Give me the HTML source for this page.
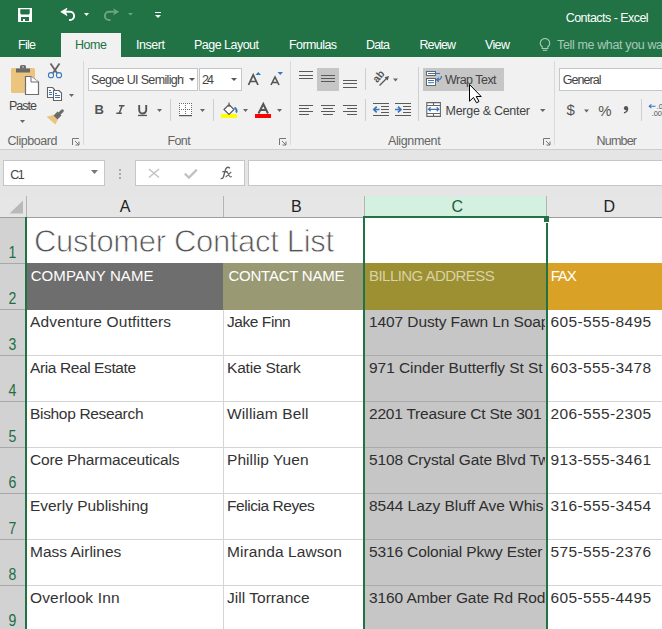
<!DOCTYPE html>
<html><head><meta charset="utf-8"><style>
html,body{margin:0;padding:0;width:662px;height:629px;overflow:hidden;background:#fff;font-family:"Liberation Sans", sans-serif;}
svg{overflow:visible}
</style></head><body>
<div style="position:absolute;left:0px;top:0px;width:662px;height:57px;background:#217346;"></div>
<div style="position:absolute;left:565.70px;top:12px;font-size:12.5px;line-height:12.5px;letter-spacing:-0.540px;color:#fff;white-space:nowrap;">Contacts - Excel</div>
<div style="position:absolute;left:61px;top:33px;width:60px;height:24px;background:#f1f1f1;"></div>
<div style="position:absolute;left:18.00px;top:39px;font-size:12.5px;line-height:12.5px;letter-spacing:-0.712px;color:#fff;white-space:nowrap;">File</div>
<div style="position:absolute;left:75.00px;top:39px;font-size:12.5px;line-height:12.5px;letter-spacing:-0.450px;color:#217346;white-space:nowrap;">Home</div>
<div style="position:absolute;left:136.00px;top:39px;font-size:12.5px;line-height:12.5px;letter-spacing:-0.452px;color:#fff;white-space:nowrap;">Insert</div>
<div style="position:absolute;left:194.00px;top:39px;font-size:12.5px;line-height:12.5px;letter-spacing:-0.520px;color:#fff;white-space:nowrap;">Page Layout</div>
<div style="position:absolute;left:289.00px;top:39px;font-size:12.5px;line-height:12.5px;letter-spacing:-0.586px;color:#fff;white-space:nowrap;">Formulas</div>
<div style="position:absolute;left:366.00px;top:39px;font-size:12.5px;line-height:12.5px;letter-spacing:-0.804px;color:#fff;white-space:nowrap;">Data</div>
<div style="position:absolute;left:419.50px;top:39px;font-size:12.5px;line-height:12.5px;letter-spacing:-0.905px;color:#fff;white-space:nowrap;">Review</div>
<div style="position:absolute;left:485.00px;top:39px;font-size:12.5px;line-height:12.5px;letter-spacing:-0.633px;color:#fff;white-space:nowrap;">View</div>
<div style="position:absolute;left:557.00px;top:39px;font-size:12.5px;line-height:12.5px;letter-spacing:-0.360px;color:rgba(255,255,255,0.62);white-space:nowrap;">Tell me what you want to do</div>
<div style="position:absolute;left:0px;top:57px;width:662px;height:92px;background:#f1f1f1;"></div>
<div style="position:absolute;left:83px;top:61px;width:1px;height:84px;background:#dadada;"></div>
<div style="position:absolute;left:290px;top:61px;width:1px;height:84px;background:#dadada;"></div>
<div style="position:absolute;left:554px;top:61px;width:1px;height:84px;background:#dadada;"></div>
<div style="position:absolute;left:9.00px;top:100px;font-size:12.5px;line-height:12.5px;letter-spacing:-0.991px;color:#444;white-space:nowrap;">Paste</div>
<div style="position:absolute;left:7.50px;top:135px;font-size:12.5px;line-height:12.5px;letter-spacing:-0.450px;color:#666;white-space:nowrap;">Clipboard</div>
<div style="position:absolute;left:88px;top:68px;width:108px;height:21px;background:#fff;border:1px solid #c6c6c6;"></div>
<div style="position:absolute;left:91.00px;top:74px;font-size:12.5px;line-height:12.5px;letter-spacing:-0.658px;color:#444;white-space:nowrap;width:93px;overflow:hidden;">Segoe UI Semilight</div>
<div style="position:absolute;left:199px;top:68px;width:41px;height:21px;background:#fff;border:1px solid #c6c6c6;"></div>
<div style="position:absolute;left:202.00px;top:74px;font-size:12.5px;line-height:12.5px;letter-spacing:-1.900px;color:#444;white-space:nowrap;">24</div>
<div style="position:absolute;left:94.50px;top:103px;font-size:13px;line-height:13px;letter-spacing:0.000px;color:#555;white-space:nowrap;font-weight:bold">B</div>
<div style="position:absolute;left:170px;top:99px;width:1px;height:22px;background:#cfcfcf;"></div>
<div style="position:absolute;left:213px;top:99px;width:1px;height:22px;background:#cfcfcf;"></div>
<div style="position:absolute;left:221px;top:114px;width:16px;height:4px;background:#ffff00;"></div>
<div style="position:absolute;left:255px;top:114px;width:16px;height:4px;background:#ff0000;"></div>
<div style="position:absolute;left:167.50px;top:135px;font-size:12.5px;line-height:12.5px;letter-spacing:-0.638px;color:#666;white-space:nowrap;">Font</div>
<div style="position:absolute;left:317px;top:68px;width:22px;height:23px;background:#c6c6c6;"></div>
<div style="position:absolute;left:365px;top:68px;width:1px;height:22px;background:#cfcfcf;"></div>
<div style="position:absolute;left:365px;top:99px;width:1px;height:22px;background:#cfcfcf;"></div>
<div style="position:absolute;left:418px;top:67px;width:1px;height:54px;background:#cfcfcf;"></div>
<div style="position:absolute;left:423px;top:68px;width:81px;height:23px;background:#c6c6c6;"></div>
<div style="position:absolute;left:445.00px;top:74px;font-size:12.5px;line-height:12.5px;letter-spacing:-0.527px;color:#444;white-space:nowrap;">Wrap Text</div>
<div style="position:absolute;left:445.60px;top:105px;font-size:12.5px;line-height:12.5px;letter-spacing:-0.295px;color:#444;white-space:nowrap;">Merge &amp; Center</div>
<div style="position:absolute;left:388.00px;top:135px;font-size:12.5px;line-height:12.5px;letter-spacing:-0.373px;color:#666;white-space:nowrap;">Alignment</div>
<div style="position:absolute;left:559px;top:68px;width:108px;height:21px;background:#fff;border:1px solid #c6c6c6;"></div>
<div style="position:absolute;left:562.70px;top:74px;font-size:12.5px;line-height:12.5px;letter-spacing:-0.929px;color:#444;white-space:nowrap;">General</div>
<div style="position:absolute;left:566.60px;top:102px;font-size:15px;line-height:15px;letter-spacing:0.000px;color:#555;white-space:nowrap;">$</div>
<div style="position:absolute;left:598.30px;top:103px;font-size:15px;line-height:15px;letter-spacing:0.000px;color:#555;white-space:nowrap;">%</div>
<div style="position:absolute;left:641px;top:99px;width:1px;height:22px;background:#cfcfcf;"></div>
<div style="position:absolute;left:656.60px;top:103px;font-size:7.5px;line-height:7.5px;letter-spacing:0.000px;color:#555;white-space:nowrap;">.0</div>
<div style="position:absolute;left:651.60px;top:110px;font-size:7.5px;line-height:7.5px;letter-spacing:0.000px;color:#555;white-space:nowrap;">.00</div>
<div style="position:absolute;left:596.60px;top:135px;font-size:12.5px;line-height:12.5px;letter-spacing:-0.813px;color:#666;white-space:nowrap;">Number</div>
<div style="position:absolute;left:0px;top:149px;width:662px;height:47px;background:#e5e5e5;"></div>
<div style="position:absolute;left:0px;top:149px;width:662px;height:1px;background:#cdcdcd;"></div>
<div style="position:absolute;left:3px;top:160px;width:100px;height:24px;background:#fff;border:1px solid #c6c6c6;"></div>
<div style="position:absolute;left:10.20px;top:169px;font-size:12.5px;line-height:12.5px;letter-spacing:-1.575px;color:#444;white-space:nowrap;">C1</div>
<div style="position:absolute;left:119px;top:169px;width:2px;height:2px;background:#aaa;"></div>
<div style="position:absolute;left:119px;top:173px;width:2px;height:2px;background:#aaa;"></div>
<div style="position:absolute;left:119px;top:177px;width:2px;height:2px;background:#aaa;"></div>
<div style="position:absolute;left:135px;top:160px;width:108px;height:24px;background:#fff;border:1px solid #c6c6c6;"></div>
<div style="position:absolute;left:248px;top:160px;width:418px;height:24px;background:#fff;border:1px solid #c6c6c6;"></div>
<div style="position:absolute;left:0px;top:196px;width:662px;height:21px;background:#e6e6e6;"></div>
<div style="position:absolute;left:365px;top:196px;width:181px;height:21px;background:#d3f0e0;"></div>
<div style="position:absolute;left:26px;top:196px;width:1px;height:21px;background:#b4b4b4;"></div>
<div style="position:absolute;left:223px;top:196px;width:1px;height:21px;background:#b4b4b4;"></div>
<div style="position:absolute;left:364px;top:196px;width:1px;height:21px;background:#b4b4b4;"></div>
<div style="position:absolute;left:546px;top:196px;width:1px;height:21px;background:#b4b4b4;"></div>
<div style="position:absolute;left:0px;top:217px;width:662px;height:1px;background:#9e9e9e;"></div>
<div style="position:absolute;left:119.70px;top:199px;font-size:16px;line-height:16px;letter-spacing:0.000px;color:#222;white-space:nowrap;">A</div>
<div style="position:absolute;left:291.10px;top:199px;font-size:16px;line-height:16px;letter-spacing:0.000px;color:#222;white-space:nowrap;">B</div>
<div style="position:absolute;left:451.50px;top:199px;font-size:16px;line-height:16px;letter-spacing:0.000px;color:#1e5c3a;white-space:nowrap;">C</div>
<div style="position:absolute;left:603.40px;top:199px;font-size:16px;line-height:16px;letter-spacing:0.000px;color:#222;white-space:nowrap;">D</div>
<div style="position:absolute;left:0px;top:218px;width:25px;height:411px;background:#d2d2d2;"></div>
<div style="position:absolute;left:27px;top:218px;width:635px;height:411px;background:#fff;"></div>
<div style="position:absolute;left:0px;top:263px;width:25px;height:1px;background:#a8a8a8;"></div>
<div style="position:absolute;left:0px;top:309px;width:25px;height:1px;background:#a8a8a8;"></div>
<div style="position:absolute;left:0px;top:355px;width:25px;height:1px;background:#a8a8a8;"></div>
<div style="position:absolute;left:0px;top:401px;width:25px;height:1px;background:#a8a8a8;"></div>
<div style="position:absolute;left:0px;top:447px;width:25px;height:1px;background:#a8a8a8;"></div>
<div style="position:absolute;left:0px;top:493px;width:25px;height:1px;background:#a8a8a8;"></div>
<div style="position:absolute;left:0px;top:539px;width:25px;height:1px;background:#a8a8a8;"></div>
<div style="position:absolute;left:0px;top:585px;width:25px;height:1px;background:#a8a8a8;"></div>
<div style="position:absolute;left:27px;top:263px;width:196px;height:47px;background:#6e6e6e;"></div>
<div style="position:absolute;left:223px;top:263px;width:141px;height:47px;background:#999a73;"></div>
<div style="position:absolute;left:364px;top:263px;width:182px;height:47px;background:#9c9032;"></div>
<div style="position:absolute;left:546px;top:263px;width:116px;height:47px;background:#d9a125;"></div>
<div style="position:absolute;left:364px;top:310px;width:182px;height:319px;background:#c6c6c6;"></div>
<div style="position:absolute;left:27px;top:355px;width:635px;height:1px;background:#d4d4d4;"></div>
<div style="position:absolute;left:364px;top:355px;width:182px;height:1px;background:#aaaaaa;"></div>
<div style="position:absolute;left:27px;top:401px;width:635px;height:1px;background:#d4d4d4;"></div>
<div style="position:absolute;left:364px;top:401px;width:182px;height:1px;background:#aaaaaa;"></div>
<div style="position:absolute;left:27px;top:447px;width:635px;height:1px;background:#d4d4d4;"></div>
<div style="position:absolute;left:364px;top:447px;width:182px;height:1px;background:#aaaaaa;"></div>
<div style="position:absolute;left:27px;top:493px;width:635px;height:1px;background:#d4d4d4;"></div>
<div style="position:absolute;left:364px;top:493px;width:182px;height:1px;background:#aaaaaa;"></div>
<div style="position:absolute;left:27px;top:539px;width:635px;height:1px;background:#d4d4d4;"></div>
<div style="position:absolute;left:364px;top:539px;width:182px;height:1px;background:#aaaaaa;"></div>
<div style="position:absolute;left:27px;top:585px;width:635px;height:1px;background:#d4d4d4;"></div>
<div style="position:absolute;left:364px;top:585px;width:182px;height:1px;background:#aaaaaa;"></div>
<div style="position:absolute;left:223px;top:310px;width:1px;height:319px;background:#d4d4d4;"></div>
<div style="position:absolute;left:0px;width:25px;text-align:center;top:245px;font-size:16px;line-height:16px;color:#1e6e42;transform:scaleX(0.88)">1</div>
<div style="position:absolute;left:0px;width:25px;text-align:center;top:291px;font-size:16px;line-height:16px;color:#1e6e42;transform:scaleX(0.88)">2</div>
<div style="position:absolute;left:0px;width:25px;text-align:center;top:337px;font-size:16px;line-height:16px;color:#1e6e42;transform:scaleX(0.88)">3</div>
<div style="position:absolute;left:0px;width:25px;text-align:center;top:383px;font-size:16px;line-height:16px;color:#1e6e42;transform:scaleX(0.88)">4</div>
<div style="position:absolute;left:0px;width:25px;text-align:center;top:429px;font-size:16px;line-height:16px;color:#1e6e42;transform:scaleX(0.88)">5</div>
<div style="position:absolute;left:0px;width:25px;text-align:center;top:475px;font-size:16px;line-height:16px;color:#1e6e42;transform:scaleX(0.88)">6</div>
<div style="position:absolute;left:0px;width:25px;text-align:center;top:521px;font-size:16px;line-height:16px;color:#1e6e42;transform:scaleX(0.88)">7</div>
<div style="position:absolute;left:0px;width:25px;text-align:center;top:567px;font-size:16px;line-height:16px;color:#1e6e42;transform:scaleX(0.88)">8</div>
<div style="position:absolute;left:0px;width:25px;text-align:center;top:613px;font-size:16px;line-height:16px;color:#1e6e42;transform:scaleX(0.88)">9</div>
<div style="position:absolute;left:34.00px;top:226px;font-size:31px;line-height:31px;letter-spacing:-0.334px;color:#555;white-space:nowrap;-webkit-text-stroke:0.8px #fff;paint-order:normal">Customer Contact List</div>
<div style="position:absolute;left:30.70px;top:268px;font-size:15px;line-height:15px;letter-spacing:0.076px;color:#fff;white-space:nowrap;">COMPANY NAME</div>
<div style="position:absolute;left:228.50px;top:268px;font-size:15px;line-height:15px;letter-spacing:-0.238px;color:#fff;white-space:nowrap;">CONTACT NAME</div>
<div style="position:absolute;left:369.00px;top:268px;font-size:15px;line-height:15px;letter-spacing:-0.541px;color:#d9d2a6;white-space:nowrap;">BILLING ADDRESS</div>
<div style="position:absolute;left:550.70px;top:268px;font-size:15px;line-height:15px;letter-spacing:-1.175px;color:#fff;white-space:nowrap;">FAX</div>
<div style="position:absolute;left:30.00px;top:314px;font-size:15.5px;line-height:15.5px;letter-spacing:0.166px;color:#333333;white-space:nowrap;">Adventure Outfitters</div>
<div style="position:absolute;left:227.00px;top:314px;font-size:15.5px;line-height:15.5px;letter-spacing:-0.437px;color:#333333;white-space:nowrap;">Jake Finn</div>
<div style="position:absolute;left:365px;top:287px;width:180px;height:46px;overflow:hidden">
<div style="position:absolute;left:4.00px;top:27px;font-size:15.5px;line-height:15.5px;letter-spacing:0.000px;color:#2e2e2e;white-space:nowrap;letter-spacing:-0.100px">1407 Dusty Fawn Ln Soap</div>
</div>
<div style="position:absolute;left:550.50px;top:314px;font-size:15.5px;line-height:15.5px;letter-spacing:0.361px;color:#333333;white-space:nowrap;">605-555-8495</div>
<div style="position:absolute;left:30.00px;top:360px;font-size:15.5px;line-height:15.5px;letter-spacing:-0.394px;color:#333333;white-space:nowrap;">Aria Real Estate</div>
<div style="position:absolute;left:227.00px;top:360px;font-size:15.5px;line-height:15.5px;letter-spacing:-0.204px;color:#333333;white-space:nowrap;">Katie Stark</div>
<div style="position:absolute;left:365px;top:333px;width:180px;height:46px;overflow:hidden">
<div style="position:absolute;left:4.00px;top:27px;font-size:15.5px;line-height:15.5px;letter-spacing:0.000px;color:#2e2e2e;white-space:nowrap;letter-spacing:-0.050px">971 Cinder Butterfly St St</div>
</div>
<div style="position:absolute;left:550.50px;top:360px;font-size:15.5px;line-height:15.5px;letter-spacing:0.361px;color:#333333;white-space:nowrap;">603-555-3478</div>
<div style="position:absolute;left:30.00px;top:406px;font-size:15.5px;line-height:15.5px;letter-spacing:-0.324px;color:#333333;white-space:nowrap;">Bishop Research</div>
<div style="position:absolute;left:227.00px;top:406px;font-size:15.5px;line-height:15.5px;letter-spacing:0.128px;color:#333333;white-space:nowrap;">William Bell</div>
<div style="position:absolute;left:365px;top:379px;width:180px;height:46px;overflow:hidden">
<div style="position:absolute;left:4.00px;top:27px;font-size:15.5px;line-height:15.5px;letter-spacing:0.000px;color:#2e2e2e;white-space:nowrap;letter-spacing:-0.213px">2201 Treasure Ct Ste 301</div>
</div>
<div style="position:absolute;left:550.50px;top:406px;font-size:15.5px;line-height:15.5px;letter-spacing:0.361px;color:#333333;white-space:nowrap;">206-555-2305</div>
<div style="position:absolute;left:30.00px;top:452px;font-size:15.5px;line-height:15.5px;letter-spacing:-0.157px;color:#333333;white-space:nowrap;">Core Pharmaceuticals</div>
<div style="position:absolute;left:227.00px;top:452px;font-size:15.5px;line-height:15.5px;letter-spacing:0.071px;color:#333333;white-space:nowrap;">Phillip Yuen</div>
<div style="position:absolute;left:365px;top:425px;width:180px;height:46px;overflow:hidden">
<div style="position:absolute;left:4.00px;top:27px;font-size:15.5px;line-height:15.5px;letter-spacing:0.000px;color:#2e2e2e;white-space:nowrap;letter-spacing:-0.120px">5108 Crystal Gate Blvd Tw</div>
</div>
<div style="position:absolute;left:550.50px;top:452px;font-size:15.5px;line-height:15.5px;letter-spacing:0.361px;color:#333333;white-space:nowrap;">913-555-3461</div>
<div style="position:absolute;left:30.00px;top:498px;font-size:15.5px;line-height:15.5px;letter-spacing:-0.030px;color:#333333;white-space:nowrap;">Everly Publishing</div>
<div style="position:absolute;left:227.00px;top:498px;font-size:15.5px;line-height:15.5px;letter-spacing:-0.444px;color:#333333;white-space:nowrap;">Felicia Reyes</div>
<div style="position:absolute;left:365px;top:471px;width:180px;height:46px;overflow:hidden">
<div style="position:absolute;left:4.00px;top:27px;font-size:15.5px;line-height:15.5px;letter-spacing:0.000px;color:#2e2e2e;white-space:nowrap;letter-spacing:-0.035px">8544 Lazy Bluff Ave Whis</div>
</div>
<div style="position:absolute;left:550.50px;top:498px;font-size:15.5px;line-height:15.5px;letter-spacing:0.361px;color:#333333;white-space:nowrap;">316-555-3454</div>
<div style="position:absolute;left:30.00px;top:544px;font-size:15.5px;line-height:15.5px;letter-spacing:-0.001px;color:#333333;white-space:nowrap;">Mass Airlines</div>
<div style="position:absolute;left:227.00px;top:544px;font-size:15.5px;line-height:15.5px;letter-spacing:0.083px;color:#333333;white-space:nowrap;">Miranda Lawson</div>
<div style="position:absolute;left:365px;top:517px;width:180px;height:46px;overflow:hidden">
<div style="position:absolute;left:4.00px;top:27px;font-size:15.5px;line-height:15.5px;letter-spacing:0.000px;color:#2e2e2e;white-space:nowrap;letter-spacing:-0.136px">5316 Colonial Pkwy Ester</div>
</div>
<div style="position:absolute;left:550.50px;top:544px;font-size:15.5px;line-height:15.5px;letter-spacing:0.361px;color:#333333;white-space:nowrap;">575-555-2376</div>
<div style="position:absolute;left:30.00px;top:590px;font-size:15.5px;line-height:15.5px;letter-spacing:0.157px;color:#333333;white-space:nowrap;">Overlook Inn</div>
<div style="position:absolute;left:227.00px;top:590px;font-size:15.5px;line-height:15.5px;letter-spacing:0.024px;color:#333333;white-space:nowrap;">Jill Torrance</div>
<div style="position:absolute;left:365px;top:563px;width:180px;height:46px;overflow:hidden">
<div style="position:absolute;left:4.00px;top:27px;font-size:15.5px;line-height:15.5px;letter-spacing:0.000px;color:#2e2e2e;white-space:nowrap;letter-spacing:-0.090px">3160 Amber Gate Rd Rod</div>
</div>
<div style="position:absolute;left:550.50px;top:590px;font-size:15.5px;line-height:15.5px;letter-spacing:0.361px;color:#333333;white-space:nowrap;">605-555-4495</div>
<div style="position:absolute;left:25px;top:217px;width:2px;height:412px;background:#217346;"></div>
<div style="position:absolute;left:363px;top:216px;width:184px;height:2px;background:#217346;"></div>
<div style="position:absolute;left:363px;top:216px;width:2px;height:413px;background:#217346;"></div>
<div style="position:absolute;left:546px;top:223px;width:2px;height:406px;background:#217346;"></div>
<div style="position:absolute;left:544px;top:216px;width:5px;height:6px;background:#217346;"></div>
<svg style="position:absolute;left:0;top:0" width="662" height="629" viewBox="0 0 662 629"><path fill-rule="evenodd" fill="#fff" d="M18 8H32V22H18Z M20.3 9.3H29.7V13.6L28.8 14.5H21.2L20.3 13.6Z M21 16.9H29V20.9H25V19H23V20.9H21Z"/><path d="M64.5 11.8H70A4.1 4.1 0 0 1 70 20H69" fill="none" stroke="#fff" stroke-width="2"/><path d="M60.8 11.8L67 8.3L65.3 11.8L67 15.5Z" fill="#fff" stroke="#fff" stroke-width="0.8" stroke-linejoin="round"/><path d="M84 13H89L86.5 16Z" fill="#fff"/><path d="M114.5 11.8H109A4.1 4.1 0 0 0 109 20H110.5" fill="none" stroke="rgba(255,255,255,0.35)" stroke-width="2"/><path d="M119.2 11.8L113 8.3L114.7 11.8L113 15.5Z" fill="rgba(255,255,255,0.35)"/><path d="M128 13H133L130.5 15.5Z" fill="rgba(255,255,255,0.35)"/><rect x="155" y="12" width="6" height="1" fill="#fff"/><path d="M155 15H161L158.0 18Z" fill="#fff"/><path d="M545 38.5A4.6 4.6 0 0 0 542.2 46.8V48.5H547.8V46.8A4.6 4.6 0 0 0 545 38.5Z" fill="none" stroke="rgba(255,255,255,0.62)" stroke-width="1.1"/><path d="M542.8 50.3H547.2" stroke="rgba(255,255,255,0.62)" stroke-width="1.1"/><rect x="11" y="68" width="24" height="25" rx="1.5" fill="#ebc47e"/><path d="M16 68.5H30V72.5H16Z" fill="#6a6a6a"/><path d="M20 68.8V66.6Q20 65 21.6 65H24.4Q26 65 26 66.6V68.8Z" fill="#6a6a6a"/><rect x="22.4" y="66.2" width="1.3" height="1.3" fill="#e9e9e9"/><path d="M25.5 76.5H31L38.5 82V94.5H25.5Z" fill="#fff" stroke="#6d6d6d" stroke-width="1.2"/><path d="M31 76.5V82H38.5" fill="#fff" stroke="#6d6d6d" stroke-width="1"/><path d="M20 120H25L22.5 123Z" fill="#666"/><path d="M50.5 63.5L57 73M59.5 63.5L53 73" stroke="#636363" stroke-width="1.8"/><circle cx="51" cy="75.2" r="2.6" fill="none" stroke="#3a76bd" stroke-width="1.05"/><circle cx="59" cy="75.2" r="2.6" fill="none" stroke="#3a76bd" stroke-width="1.05"/><path d="M47.5 87.5H52.5L54.5 89.5V97.5H47.5Z" fill="#fff" stroke="#636363" stroke-width="1.1"/><path d="M53.5 90.5H59L61.5 93V100.5H53.5Z" fill="#fff" stroke="#636363" stroke-width="1.1"/><path d="M49 90.5H51M49 92.5H52M49 94.5H52M55 93.5H57M55 95.5H60M55 97.5H60" stroke="#3a76bd" stroke-width="1"/><path d="M69 94H74L71.5 97Z" fill="#666"/><path d="M62.3 110.8L59 114" stroke="#6a6a6a" stroke-width="3" stroke-linecap="round"/><path d="M59.5 113.5L54.5 118.5" stroke="#6a6a6a" stroke-width="5.5"/><path d="M46.5 116.8L53 115L57.8 119.8L55.5 124.5Z" fill="#ebc47e"/><path d="M72.5 145V138.5H79" fill="none" stroke="#777" stroke-width="1"/><path d="M75 141L79 145M79 141.5V145H75.5" fill="none" stroke="#777" stroke-width="1"/><path d="M189 78H195L192.0 81Z" fill="#555"/><path d="M231 78H237L234.0 81Z" fill="#555"/><path d="M248.5 85L253.2 74.8L258 85M250.2 81.5H256.2" fill="none" stroke="#555" stroke-width="1.7"/><path d="M255.5 75H261L258.25 72Z" fill="#3a76bd"/><path d="M271 85L275 77L279 85M272.5 82.5H277.5" fill="none" stroke="#555" stroke-width="1.6"/><path d="M277.5 72H283L280.25 75Z" fill="#3a76bd"/><path d="M119 105.8H124.5M116.3 113.3H121.8M122.2 105.8L119.2 113.3" fill="none" stroke="#555" stroke-width="1.5"/><path d="M139.2 105V110A3.5 3.5 0 0 0 146.2 110V105" fill="none" stroke="#555" stroke-width="1.9"/><rect x="138" y="114.8" width="9" height="1.3" fill="#555"/><path d="M157 109H162L159.5 112Z" fill="#666"/><rect x="179" y="103" width="13" height="12" fill="#fff"/><rect x="179" y="103" width="1" height="1" fill="#6a6a6a"/><rect x="179" y="105" width="1" height="1" fill="#6a6a6a"/><rect x="179" y="107" width="1" height="1" fill="#6a6a6a"/><rect x="179" y="109" width="1" height="1" fill="#6a6a6a"/><rect x="179" y="111" width="1" height="1" fill="#6a6a6a"/><rect x="179" y="113" width="1" height="1" fill="#6a6a6a"/><rect x="181" y="103" width="1" height="1" fill="#6a6a6a"/><rect x="181" y="109" width="1" height="1" fill="#6a6a6a"/><rect x="183" y="103" width="1" height="1" fill="#6a6a6a"/><rect x="183" y="109" width="1" height="1" fill="#6a6a6a"/><rect x="185" y="103" width="1" height="1" fill="#6a6a6a"/><rect x="185" y="105" width="1" height="1" fill="#6a6a6a"/><rect x="185" y="107" width="1" height="1" fill="#6a6a6a"/><rect x="185" y="109" width="1" height="1" fill="#6a6a6a"/><rect x="185" y="111" width="1" height="1" fill="#6a6a6a"/><rect x="185" y="113" width="1" height="1" fill="#6a6a6a"/><rect x="187" y="103" width="1" height="1" fill="#6a6a6a"/><rect x="187" y="109" width="1" height="1" fill="#6a6a6a"/><rect x="189" y="103" width="1" height="1" fill="#6a6a6a"/><rect x="189" y="109" width="1" height="1" fill="#6a6a6a"/><rect x="191" y="103" width="1" height="1" fill="#6a6a6a"/><rect x="191" y="105" width="1" height="1" fill="#6a6a6a"/><rect x="191" y="107" width="1" height="1" fill="#6a6a6a"/><rect x="191" y="109" width="1" height="1" fill="#6a6a6a"/><rect x="191" y="111" width="1" height="1" fill="#6a6a6a"/><rect x="191" y="113" width="1" height="1" fill="#6a6a6a"/><rect x="179" y="115" width="13" height="1.2" fill="#555"/><path d="M200 109H205L202.5 112Z" fill="#666"/><path d="M229 102.5V107M224 109.5L229 104.5L234 109.5L229 114.5Z" fill="#fff" stroke="#555" stroke-width="1.1"/><path d="M234.5 107.5C237 109 237 111.5 236 112.5" fill="none" stroke="#3a76bd" stroke-width="2"/><path d="M243 109H248L245.5 112Z" fill="#666"/><path d="M258.5 113.5L263.3 104L268 113.5M260.3 110H266.3" fill="none" stroke="#555" stroke-width="2"/><path d="M277 109H282L279.5 112Z" fill="#666"/><path d="M279.5 145V138.5H286" fill="none" stroke="#777" stroke-width="1"/><path d="M282 141L286 145M286 141.5V145H282.5" fill="none" stroke="#777" stroke-width="1"/><rect x="299" y="71" width="14" height="1" fill="#5a5a5a"/><rect x="299" y="75" width="14" height="1" fill="#5a5a5a"/><rect x="299" y="78" width="14" height="1" fill="#5a5a5a"/><rect x="321" y="75" width="14" height="1" fill="#5a5a5a"/><rect x="321" y="78" width="14" height="1" fill="#5a5a5a"/><rect x="321" y="81" width="14" height="1" fill="#5a5a5a"/><rect x="343" y="80" width="14" height="1" fill="#5a5a5a"/><rect x="343" y="83" width="14" height="1" fill="#5a5a5a"/><rect x="343" y="87" width="14" height="1" fill="#5a5a5a"/><text x="0" y="0" font-size="10.5" font-weight="bold" font-family="Liberation Sans" fill="#555" transform="translate(377.3 83.3) rotate(-50)">ab</text><path d="M379.5 85.5L387 78" fill="none" stroke="#555" stroke-width="1.2"/><path d="M389 76L384.6 77.3L387.7 80.4Z" fill="#555"/><path d="M393 78.5H398L395.5 81.5Z" fill="#666"/><rect x="299" y="105" width="14" height="1" fill="#5a5a5a"/><rect x="321" y="105" width="14" height="1" fill="#5a5a5a"/><rect x="343" y="105" width="14" height="1" fill="#5a5a5a"/><rect x="299" y="108" width="10" height="1" fill="#5a5a5a"/><rect x="323" y="108" width="10" height="1" fill="#5a5a5a"/><rect x="347" y="108" width="10" height="1" fill="#5a5a5a"/><rect x="299" y="111" width="14" height="1" fill="#5a5a5a"/><rect x="321" y="111" width="14" height="1" fill="#5a5a5a"/><rect x="343" y="111" width="14" height="1" fill="#5a5a5a"/><rect x="299" y="114" width="10" height="1" fill="#5a5a5a"/><rect x="323" y="114" width="10" height="1" fill="#5a5a5a"/><rect x="347" y="114" width="10" height="1" fill="#5a5a5a"/><rect x="373" y="103" width="16" height="1" fill="#5a5a5a"/><rect x="395" y="103" width="16" height="1" fill="#5a5a5a"/><rect x="381" y="106" width="8" height="1" fill="#5a5a5a"/><rect x="403" y="106" width="8" height="1" fill="#5a5a5a"/><rect x="381" y="109" width="8" height="1" fill="#5a5a5a"/><rect x="403" y="109" width="8" height="1" fill="#5a5a5a"/><rect x="381" y="112" width="8" height="1" fill="#5a5a5a"/><rect x="403" y="112" width="8" height="1" fill="#5a5a5a"/><rect x="373" y="115" width="16" height="1" fill="#5a5a5a"/><rect x="395" y="115" width="16" height="1" fill="#5a5a5a"/><path d="M374 109.5H379.5M376.7 106.6L373.8 109.5L376.7 112.4" fill="none" stroke="#3a76bd" stroke-width="1.7"/><path d="M395 109.5H400.8M398 106.6L400.9 109.5L398 112.4" fill="none" stroke="#3a76bd" stroke-width="1.7"/><rect x="426.5" y="71.5" width="9" height="4" fill="#fff" stroke="#666" stroke-width="1"/><path d="M428 73.5H440" stroke="#3a76bd" stroke-width="1"/><rect x="426.5" y="78.5" width="9" height="7" fill="#fff" stroke="#666" stroke-width="1"/><path d="M428 80.5H434M428 82.7H434" stroke="#3a76bd" stroke-width="1"/><path d="M441.5 76A3.6 3.6 0 0 1 437 79.8M438.7 77.8L436.5 79.8L438.7 81.8" fill="none" stroke="#3a76bd" stroke-width="1.2"/><rect x="426.8" y="102.6" width="13.6" height="13.8" fill="#fff"/><path d="M426.8 102.6H440.4V116.4H426.8ZM426.8 105.5H440.4M426.8 113.5H440.4M433.5 102.6V105.5M433.5 113.5V116.4" fill="none" stroke="#666" stroke-width="1.1"/><path d="M428.5 109.3H438.8M430.6 107.3L428.5 109.3L430.6 111.3M436.7 107.3L438.8 109.3L436.7 111.3" fill="none" stroke="#3a76bd" stroke-width="1.2"/><path d="M540 109H545.5L542.75 112Z" fill="#666"/><path d="M543.5 145V138.5H550" fill="none" stroke="#777" stroke-width="1"/><path d="M546 141L550 145M550 141.5V145H546.5" fill="none" stroke="#777" stroke-width="1"/><path d="M584 109.5H589L586.5 112.5Z" fill="#666"/><circle cx="626" cy="108.2" r="2.1" fill="#555"/><path d="M627.6 108.5C627.6 110.8 626.3 112.2 624 112.9" fill="none" stroke="#555" stroke-width="1.4"/><path d="M649.2 106.3H655.5M651.4 104.4L649.2 106.3L651.4 108.2" fill="none" stroke="#3a76bd" stroke-width="1.1"/><path d="M91 170H98L94.5 174Z" fill="#777"/><path d="M149 169L159 177.5M159 169L149 177.5" stroke="#c2c2c2" stroke-width="1.5"/><path d="M184.8 173.6L189 177.6L196.8 169.6" fill="none" stroke="#c2c2c2" stroke-width="2.3"/><path d="M229.8 168.4Q228.6 166.6 226.8 167.6Q225.7 168.3 225.2 170.5L223.4 177Q222.8 179 220.6 178.6M222.3 171.6H227.6" fill="none" stroke="#606060" stroke-width="1.35"/><path d="M225.6 172.2Q226.9 171.2 227.9 173.2L229.4 176Q230.3 177.6 231.8 176.4M231.2 172L225.6 177.2" fill="none" stroke="#606060" stroke-width="1.05"/><path d="M23 200.5V213.5H9.5Z" fill="#b9b9b9"/><path d="M469.5 84.5V101.2L473.5 97.5L476.5 102.8L479 101.5L476.2 96.5H481.2Z" fill="#fff" stroke="#000" stroke-width="1" stroke-linejoin="round"/></svg>
</body></html>
